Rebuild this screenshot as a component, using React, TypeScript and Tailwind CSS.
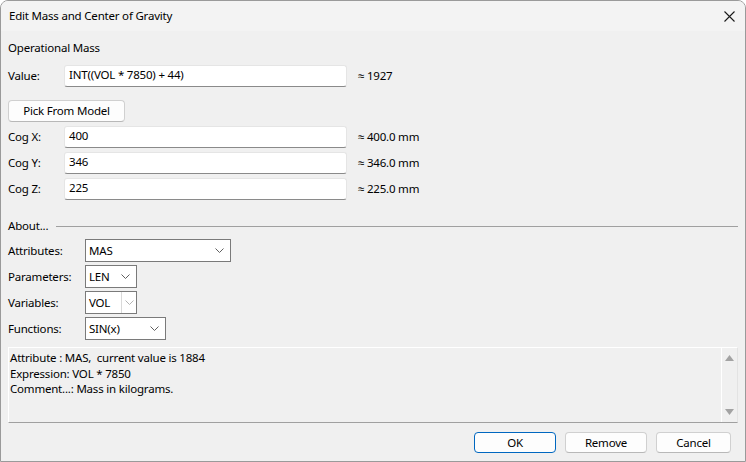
import { ReactNode } from 'react';

const font = { fontFamily: '"Noto Sans", "Segoe UI", Arial, sans-serif' };

const Chevron = ({ faded = false }: { faded?: boolean }) => (
  <svg width="9" height="5" viewBox="0 0 9 5" className="shrink-0">
    <path d="M0.5 0.5 L4.5 4.5 L8.5 0.5" fill="none" stroke={faded ? '#b4b4b4' : '#5f5f5f'} strokeWidth="1" />
  </svg>
);

const Field = ({ label, value, note }: { label: string; value: string; note: string }) => (
  <div className="flex items-center h-[22px]">
    <span className="w-[56px] shrink-0">{label}</span>
    <div className="w-[283px] h-[22px] bg-white border border-[#e5e5e5] border-b-[#8a8a8a] rounded-[3px] pl-[4px] flex items-center pb-[3px]">
      {value}
    </div>
    <span className="ml-[11px]">{note}</span>
  </div>
);

const Combo = ({ label, value, width, split = false }: { label: string; value: string; width: string; split?: boolean }) => (
  <div className="flex items-center h-[23px]">
    <span className="w-[77px] shrink-0">{label}</span>
    <div className={`${width} h-[23px] bg-white border border-[#7a7a7a] flex items-center`}>
      <span className="pl-[3px] flex-1">{value}</span>
      {split ? (
        <div className="h-full border-l border-[#d9d9d9] w-[15px] flex items-center justify-center">
          <Chevron faded />
        </div>
      ) : (
        <div className="pr-[6px] flex items-center">
          <Chevron />
        </div>
      )}
    </div>
  </div>
);

const Button = ({ children, width, primary = false }: { children: ReactNode; width: string; primary?: boolean }) => (
  <button
    className={`${width} h-[21px] rounded-[4px] bg-[#fdfdfd] border flex items-center justify-center ${
      primary ? 'border-[#0067c0]' : 'border-[#d0d0d0] border-b-[#b8b8b8]'
    }`}
  >
    {children}
  </button>
);

export default function App() {
  return (
    <div
      style={font}
      className="w-[746px] h-[462px] bg-[#f0f0f0] border border-[#9a9a9a] rounded-t-[8px] overflow-hidden flex flex-col text-[11.5px] tracking-[-0.2px] text-black leading-[16px]"
    >
      {/* Title bar */}
      <div className="h-[30px] bg-[#f3f3f3] flex items-center justify-between pl-[8px] pr-[10px] shrink-0">
        <span className="pb-[1px]">Edit Mass and Center of Gravity</span>
        <svg width="11" height="11" viewBox="0 0 11 11">
          <path d="M0.5 0.5 L10.5 10.5 M10.5 0.5 L0.5 10.5" stroke="#1a1a1a" strokeWidth="1.1" />
        </svg>
      </div>

      <div className="flex flex-col px-[7px]">
        <div className="mt-[9px] h-[16px]">Operational Mass</div>

        <div className="mt-[9px]">
          <Field label="Value:" value="INT((VOL * 7850) + 44)" note="≈ 1927" />
        </div>

        <div className="mt-[13px]">
          <Button width="w-[117px] h-[22px]">Pick From Model</Button>
        </div>

        <div className="mt-[4px] flex flex-col gap-[4px]">
          <Field label="Cog X:" value="400" note="≈ 400.0 mm" />
          <Field label="Cog Y:" value="346" note="≈ 346.0 mm" />
          <Field label="Cog Z:" value="225" note="≈ 225.0 mm" />
        </div>

        {/* About separator */}
        <div className="mt-[18px] h-[16px] flex items-center">
          <span>About...</span>
          <div className="ml-[8px] flex-1 h-px bg-[#a0a0a0] mt-[1px]" />
        </div>

        <div className="mt-[5px] flex flex-col gap-[3px]">
          <Combo label="Attributes:" value="MAS" width="w-[146px]" />
          <Combo label="Parameters:" value="LEN" width="w-[52px]" />
          <Combo label="Variables:" value="VOL" width="w-[52px]" split />
          <Combo label="Functions:" value="SIN(x)" width="w-[81px]" />
        </div>

        {/* Read-only description */}
        <div className="mt-[7px] h-[76px] flex border border-white border-b-[#a0a0a0] border-r-[#e3e3e3]">
          <div className="flex-1 pl-[1px] pt-[2px] leading-[15.5px]">
            <div>Attribute : MAS,&nbsp; current value is 1884</div>
            <div>Expression: VOL * 7850</div>
            <div>Comment...: Mass in kilograms.</div>
          </div>
          <div className="w-[16px] border-l border-white flex flex-col items-center justify-between py-[7px]">
            <svg width="9" height="6" viewBox="0 0 9 6">
              <path d="M4.5 0 L9 6 L0 6 Z" fill="#a3a3a3" />
            </svg>
            <svg width="9" height="6" viewBox="0 0 9 6">
              <path d="M0 0 L9 0 L4.5 6 Z" fill="#a3a3a3" />
            </svg>
          </div>
        </div>

        <div className="mt-[9px] flex justify-end gap-[9px] pr-[7px]">
          <Button width="w-[82px]" primary>OK</Button>
          <Button width="w-[82px]">Remove</Button>
          <Button width="w-[75px]">Cancel</Button>
        </div>
      </div>
    </div>
  );
}
